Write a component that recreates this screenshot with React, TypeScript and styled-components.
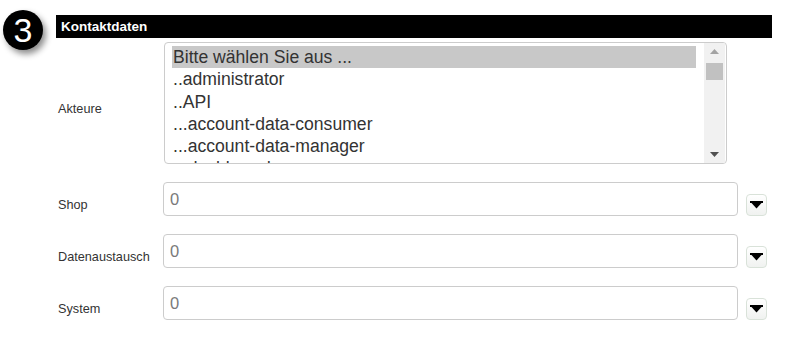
import React from "react";
import styled, { createGlobalStyle } from "styled-components";

const GlobalStyle = createGlobalStyle`
  html, body { margin: 0; padding: 0; background: #ffffff; }
  body { font-family: "Liberation Sans", Arial, sans-serif; color: #333333; }
  * { box-sizing: border-box; }
`;

const Page = styled.div`
  display: flex;
  align-items: flex-start;
  width: 786px;
  height: 342px;
  padding-top: 15px;
  overflow: hidden;
`;

const BadgeCol = styled.div`
  width: 56px;
  flex: 0 0 56px;
  padding-left: 3px;
  margin-top: -5px;
`;

const Badge = styled.div`
  width: 40px;
  height: 40px;
  border-radius: 50%;
  background: #000000;
  color: #ffffff;
  display: flex;
  align-items: center;
  justify-content: center;
  font-family: "Liberation Sans", Arial, sans-serif;
  font-size: 34px;
  line-height: 1;
  box-shadow: 3px 4px 6px rgba(0, 0, 0, 0.45);
`;

const Section = styled.div`
  width: 716px;
  display: flex;
  flex-direction: column;
`;

const Header = styled.div`
  height: 23px;
  background: #000000;
  color: #ffffff;
  font-weight: bold;
  font-size: 13.5px;
  line-height: 23px;
  padding-left: 5px;
`;

const Form = styled.div`
  display: flex;
  flex-direction: column;
  gap: 18px;
  padding-top: 4px;
`;

const Row = styled.div`
  display: flex;
  align-items: center;
`;

const Label = styled.div`
  width: 107px;
  flex: 0 0 107px;
  padding-left: 2px;
  padding-top: 12px;
  font-size: 12.7px;
  color: #333333;
`;

const ListBox = styled.div`
  width: 563px;
  height: 122px;
  border: 1px solid #cccccc;
  border-radius: 4px;
  display: flex;
  overflow: hidden;
  margin-left: 1px;
`;

const Options = styled.div`
  flex: 1;
  padding: 3px 8px 0 7px;
  overflow: hidden;
`;

const Option = styled.div<{ $selected?: boolean }>`
  font-size: 17.6px;
  line-height: 22.3px;
  height: 22.3px;
  padding-left: 1px;
  white-space: nowrap;
  color: #333333;
  background: ${(p) => (p.$selected ? "#c8c8c8" : "transparent")};
`;

const Scrollbar = styled.div`
  width: 21px;
  flex: 0 0 21px;
  background: #f1f1f1;
  display: flex;
  flex-direction: column;
  align-items: center;
  padding: 0 2px;
  margin-right: 1px;
`;

const ArrowBtn = styled.div`
  height: 17px;
  width: 100%;
  display: flex;
  align-items: center;
  justify-content: center;
`;

const Thumb = styled.div`
  width: 17px;
  height: 17px;
  background: #c1c1c1;
  margin-top: 3px;
`;

const Spacer = styled.div`
  flex: 1;
`;

const TextInput = styled.div`
  width: 575px;
  height: 34px;
  border: 1px solid #cccccc;
  border-radius: 4px;
  padding: 6px 6px;
  font-size: 16.5px;
  line-height: 20px;
  color: #7a7a7a;
`;

const CaretButton = styled.div`
  width: 21px;
  height: 22px;
  margin-left: 8px;
  margin-top: 12px;
  border: 1px solid #d9e2d9;
  border-radius: 4px;
  background: linear-gradient(#ffffff, #f0f2f0);
  display: flex;
  align-items: center;
  justify-content: center;
`;

const Caret = () => (
  <svg width="13" height="8" viewBox="0 0 13 8">
    <rect x="0" y="0" width="13" height="2" fill="#000" />
    <polygon points="1.5,2 11.5,2 6.5,7.5" fill="#000" />
  </svg>
);

const UpArrow = () => (
  <svg width="9" height="5" viewBox="0 0 9 5">
    <polygon points="0,5 9,5 4.5,0" fill="#a3a3a3" />
  </svg>
);

const DownArrow = () => (
  <svg width="9" height="5" viewBox="0 0 9 5">
    <polygon points="0,0 9,0 4.5,5" fill="#505050" />
  </svg>
);

const options = [
  "Bitte wählen Sie aus ...",
  "..administrator",
  "..API",
  "...account-data-consumer",
  "...account-data-manager",
  "...dashboard-user",
];

const fields = ["Shop", "Datenaustausch", "System"];

export default function App() {
  return (
    <>
      <GlobalStyle />
      <Page>
        <BadgeCol>
          <Badge>3</Badge>
        </BadgeCol>
        <Section>
          <Header>Kontaktdaten</Header>
          <Form>
            <Row>
              <Label>Akteure</Label>
              <ListBox>
                <Options>
                  {options.map((o, i) => (
                    <Option key={o} $selected={i === 0}>
                      {o}
                    </Option>
                  ))}
                </Options>
                <Scrollbar>
                  <ArrowBtn>
                    <UpArrow />
                  </ArrowBtn>
                  <Thumb />
                  <Spacer />
                  <ArrowBtn>
                    <DownArrow />
                  </ArrowBtn>
                </Scrollbar>
              </ListBox>
            </Row>
            {fields.map((f) => (
              <Row key={f}>
                <Label>{f}</Label>
                <TextInput>0</TextInput>
                <CaretButton>
                  <Caret />
                </CaretButton>
              </Row>
            ))}
          </Form>
        </Section>
      </Page>
    </>
  );
}
